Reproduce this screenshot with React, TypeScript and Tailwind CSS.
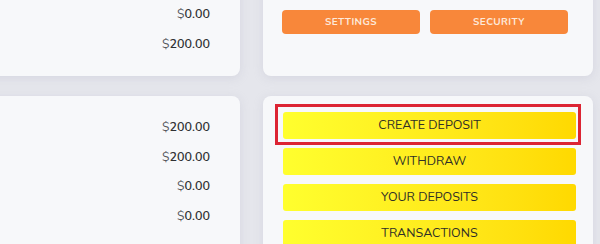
import React from "react";

const font = { fontFamily: "Nunito, Lato, 'Noto Sans', sans-serif" };

function Amount({ value }: { value: string }) {
    return (
        <div className="flex h-[29.5px] items-center justify-end text-[12.5px] text-[#2f3033]">
            <span className="font-normal text-[#55575c]">$</span>
            <span className="font-semibold">{value}</span>
        </div>
    );
}

const actions = ["CREATE DEPOSIT", "WITHDRAW", "YOUR DEPOSITS", "TRANSACTIONS"];

export default function App() {
    return (
        <div className="h-[244px] w-[600px] overflow-hidden bg-[#e5e6ec]" style={font}>
            <div className="-ml-[20px] -mt-[40px] flex flex-col gap-[20px]">
                {/* top row */}
                <div className="flex gap-[23px]">
                    <div className="h-[116px] w-[260px] rounded-[8px] bg-[#f7f8fa] pr-[30px] pt-[40px] shadow-[0_2px_10px_rgba(170,172,190,0.25)]">
                        <Amount value="0.00" />
                        <Amount value="200.00" />
                    </div>
                    <div className="flex h-[116px] w-[330px] gap-[10px] rounded-[8px] bg-[#f7f8fa] pl-[19px] pt-[50px] shadow-[0_2px_10px_rgba(170,172,190,0.25)]">
                        <button className="flex h-[24px] w-[138px] items-center justify-center rounded-[4px] bg-[#f8873a] text-[10px] font-bold tracking-[0.04em] text-[#fde9da]">
                            SETTINGS
                        </button>
                        <button className="flex h-[24px] w-[138px] items-center justify-center rounded-[4px] bg-[#f8873a] text-[10px] font-bold tracking-[0.04em] text-[#fde9da]">
                            SECURITY
                        </button>
                    </div>
                </div>

                {/* bottom row */}
                <div className="flex gap-[23px]">
                    <div className="h-[200px] w-[260px] rounded-[8px] bg-[#f7f8fa] pr-[30px] pt-[17px] shadow-[0_2px_10px_rgba(170,172,190,0.25)]">
                        <Amount value="200.00" />
                        <Amount value="200.00" />
                        <Amount value="0.00" />
                        <Amount value="0.00" />
                    </div>
                    <div className="relative flex h-[200px] w-[330px] flex-col gap-[9px] rounded-[8px] bg-[#f7f8fa] pl-[20px] pt-[16px] shadow-[0_2px_10px_rgba(170,172,190,0.25)]">
                        {actions.map((label) => (
                            <button
                                key={label}
                                className="flex h-[27px] w-[293px] items-center justify-center rounded-[3px] bg-gradient-to-r from-[#ffff2e] to-[#ffd900] text-[12.5px] text-[#302f27]"
                            >
                                {label}
                            </button>
                        ))}
                        <div className="pointer-events-none absolute left-[12px] top-[8px] h-[41px] w-[306px] border-[3px] border-[#dc2433]" />
                    </div>
                </div>
            </div>
        </div>
    );
}
